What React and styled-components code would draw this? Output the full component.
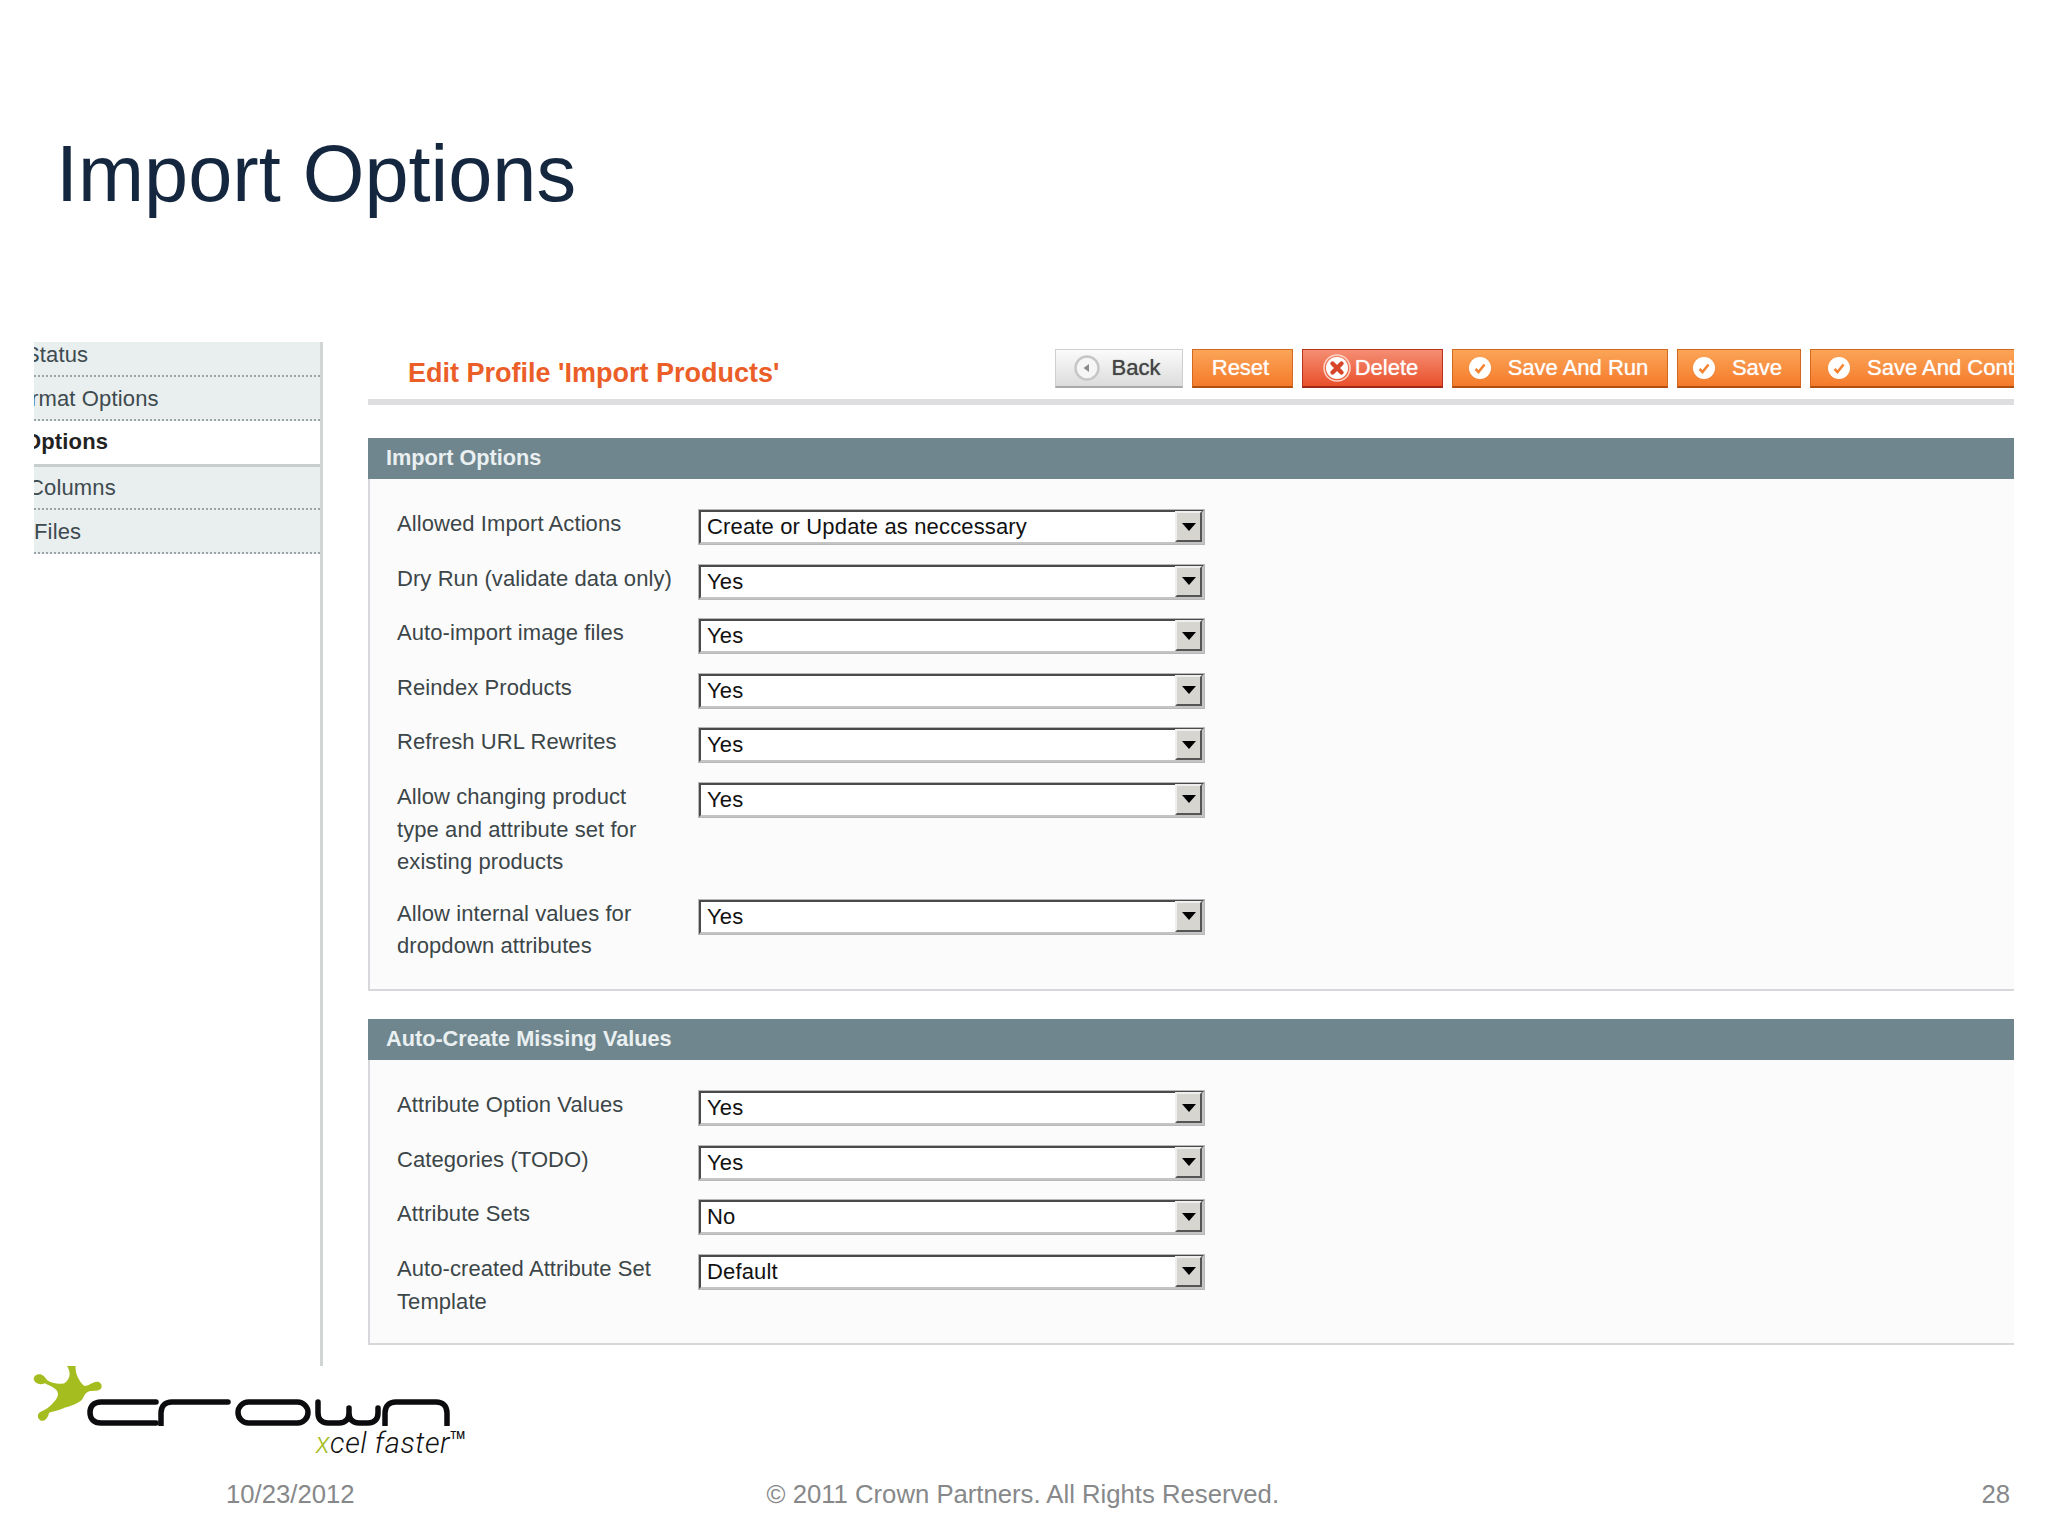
import React from 'react';
import styled, { createGlobalStyle } from 'styled-components';

const GlobalStyle = createGlobalStyle`
  html, body {
    margin: 0;
    padding: 0;
    background: #fff;
  }
  body {
    font-family: "Liberation Sans", Arial, sans-serif;
  }
`;

const Page = styled.div`
  width: 2048px;
  height: 1536px;
  overflow: hidden;
  display: flex;
  flex-direction: column;
`;

const SlideTitle = styled.h1`
  margin: 0;
  padding: 124px 0 0 56px;
  height: 342px;
  box-sizing: border-box;
  font-size: 79.3px;
  line-height: 100px;
  font-weight: 400;
  color: #14273f;
`;

const Shot = styled.div`
  display: flex;
  width: 1980px;
  margin-left: 34px;
  height: 1024px;
  overflow: hidden;
`;

const Sidebar = styled.div`
  width: 289px;
  flex: none;
  border-right: 3px solid #d2d5d6;
  box-sizing: border-box;
  height: 100%;
`;

const SideItem = styled.div`
  height: ${p => p.$height}px;
  box-sizing: border-box;
  overflow: hidden;
  padding-top: ${p => p.$top || 0}px;
  font-size: 22px;
  letter-spacing: 0.15px;
  line-height: ${p => p.$line || 32}px;
  color: ${p => (p.$active ? '#222' : '#3d4a4f')};
  font-weight: ${p => (p.$active ? 700 : 400)};
  background: ${p => (p.$active ? '#fff' : '#e9eeee')};
  border-bottom: ${p => (p.$active ? 'none' : '2px dotted #9aa3a5')};
  border-top: ${p => (p.$topLine ? '3px solid #c8cdce' : 'none')};
  span {
    display: block;
    white-space: nowrap;
    margin-left: ${p => p.$shift}px;
  }
`;

const Main = styled.div`
  flex: 1;
  min-width: 0;
  margin-left: 45px;
`;

const HeadRow = styled.div`
  height: 50px;
  display: flex;
  border-bottom: 6px solid #dedee0;
  margin-bottom: 33px;
  padding: 7px 0 0 40px;
`;

const PageHeading = styled.h2`
  margin: 0;
  width: 647px;
  flex: none;
  font-size: 27px;
  line-height: 36px;
  padding-top: 6px;
  font-weight: 700;
  color: #eb5e28;
`;

const Toolbar = styled.div`
  display: flex;
  gap: 9px;
  flex: none;
`;

const Button = styled.div`
  width: ${p => p.$width}px;
  height: 39px;
  box-sizing: border-box;
  flex: none;
  display: flex;
  align-items: center;
  justify-content: center;
  padding-right: 4px;
  gap: ${p => p.$gap || 0}px;
  white-space: nowrap;
  font-size: 22px;
  font-weight: 400;
  text-shadow: 0 0 1px ${p => (p.$kind === 'back' ? 'rgba(40,50,60,.7)' : 'rgba(255,255,255,.8)')};
  color: ${p => (p.$kind === 'back' ? '#444' : '#fff')};
  border: 1px solid ${p => (p.$kind === 'back' ? '#cfcfcf' : p.$kind === 'del' ? '#b8331b' : '#d2691e')};
  border-bottom: 2px solid ${p => (p.$kind === 'back' ? '#a9a9a9' : p.$kind === 'del' ? '#a02814' : '#b14e12')};
  background: ${p =>
    p.$kind === 'back'
      ? 'linear-gradient(#fbfbfb, #dcdcdc)'
      : p.$kind === 'del'
        ? 'linear-gradient(#f58e74, #e9502a)'
        : 'linear-gradient(#fba557, #f57a2b)'};
`;

const WideButton = styled(Button)`
  justify-content: flex-start;
  padding-left: 16px;
  padding-right: 0;
`;

const Panel = styled.section`
  margin-bottom: 28px;
`;

const PanelTitle = styled.div`
  height: 41px;
  background: #6f868e;
  box-sizing: border-box;
  padding-left: 18px;
  font-size: 21.7px;
  line-height: 40px;
  font-weight: 700;
  color: #eaf0f1;
`;

const PanelBody = styled.div`
  background: #fbfbfc;
  border-left: 2px solid #d8d8dc;
  border-bottom: 2px solid #d8d8dc;
  padding: 30px 0 ${p => p.$bottom}px 27px;
  display: flex;
  flex-direction: column;
  gap: 18.6px;
`;

const FormRow = styled.div`
  display: flex;
  align-items: flex-start;
`;

const Label = styled.div`
  width: 301px;
  flex: none;
  margin-top: -1px;
  padding-bottom: 1px;
  font-size: 22px;
  letter-spacing: 0.08px;
  line-height: 32.7px;
  color: #3c4648;
`;

const Select = styled.div`
  width: 507px;
  height: 36px;
  flex: none;
  box-sizing: border-box;
  display: flex;
  background: #fff;
  border: 3px solid #c4c4c4;
  border-top-color: #4a4a4a;
  border-left-color: #4a4a4a;
  outline: 1px solid #b8b8b8;
  outline-offset: -1px;
  font-size: 22px;
  letter-spacing: 0.15px;
  line-height: 30px;
  color: #111;
  padding-left: 6px;
`;

const SelectValue = styled.div`
  flex: 1;
  white-space: nowrap;
  overflow: hidden;
`;

const SelectArrow = styled.div`
  width: 27px;
  flex: none;
  margin-top: -1px;
  display: flex;
  align-items: center;
  justify-content: center;
  background: #d6d5d0;
  border-top: 2px solid #efefef;
  border-left: 2px solid #efefef;
  border-right: 2px solid #555;
  border-bottom: 2px solid #555;
  box-sizing: border-box;
  &::after {
    content: '';
    border-left: 7px solid transparent;
    border-right: 7px solid transparent;
    border-top: 8px solid #000;
  }
`;

const Bottom = styled.div`
  flex: 1;
  display: flex;
  flex-direction: column;
`;

const Logo = styled.div`
  width: 465px;
  height: 106px;
  display: flex;
  flex-direction: column;
  align-items: flex-end;
`;

const LogoMark = styled.svg`
  width: 465px;
  height: 60px;
  flex: none;
  display: block;
`;

const Tagline = styled.div`
  font-family: "Roboto", "Liberation Sans", sans-serif;
  font-style: italic;
  font-weight: 300;
  font-size: 29px;
  letter-spacing: 0.6px;
  line-height: 34px;
  color: #111;
  white-space: nowrap;
  em {
    color: #a5bd1f;
    font-style: italic;
  }
  sup {
    font-size: 10px;
    line-height: 0;
    vertical-align: 14px;
    font-style: normal;
    font-weight: 500;
    letter-spacing: 0;
  }
`;

const FooterRow = styled.div`
  display: flex;
  font-size: 25.7px;
  line-height: 34px;
  color: #86888a;
  padding: 5px 38px 0 226px;
  span:nth-child(2) {
    margin-left: 412px;
  }
  span:last-child {
    margin-left: auto;
  }
`;

const CheckIcon = () => (
  <svg width="24" height="24" viewBox="0 0 24 24">
    <circle cx="12" cy="12" r="11" fill="#fff" />
    <path d="M7.5 13l3 3L16.5 8.5" fill="none" stroke="#f58433" strokeWidth="2.6" />
  </svg>
);

const DeleteIcon = () => (
  <svg width="28" height="28" viewBox="0 0 28 28">
    <circle cx="14" cy="14" r="13" fill="none" stroke="#fbd3c6" strokeWidth="1.5" />
    <circle cx="14" cy="14" r="11" fill="#fff" />
    <path d="M9.5 9.5l9 9M18.5 9.5l-9 9" stroke="#d8462a" strokeWidth="4.4" strokeLinecap="round" />
  </svg>
);

const BackIcon = () => (
  <svg width="26" height="26" viewBox="0 0 26 26">
    <circle cx="13" cy="13" r="11.5" fill="#f6f6f6" stroke="#c6c6c6" strokeWidth="2.4" />
    <path d="M15 9v8l-5.5-4z" fill="#8c8c8c" />
  </svg>
);

function FieldRow({ label, value }) {
  return (
    <FormRow>
      <Label>{label}</Label>
      <Select>
        <SelectValue>{value}</SelectValue>
        <SelectArrow />
      </Select>
    </FormRow>
  );
}

export default function App() {
  return (
    <Page>
      <GlobalStyle />
      <SlideTitle>Import Options</SlideTitle>
      <Shot>
        <Sidebar>
          <SideItem $height={35} $line={26} $shift={-9}><span>Status</span></SideItem>
          <SideItem $height={44} $top={6} $shift={-29}><span>Format Options</span></SideItem>
          <SideItem $height={43} $top={5} $active $shift={-10}><span>Options</span></SideItem>
          <SideItem $height={46} $top={5} $topLine $shift={-6}><span>Columns</span></SideItem>
          <SideItem $height={44} $top={6} $shift={0}><span>Files</span></SideItem>
        </Sidebar>
        <Main>
          <HeadRow>
            <PageHeading>Edit Profile 'Import Products'</PageHeading>
            <Toolbar>
              <Button $kind="back" $width={128} $gap={12}><BackIcon />Back</Button>
              <Button $width={101}>Reset</Button>
              <Button $kind="del" $width={141} $gap={4}><DeleteIcon />Delete</Button>
              <Button $width={216} $gap={16}><CheckIcon />Save And Run</Button>
              <Button $width={124} $gap={16}><CheckIcon />Save</Button>
              <WideButton $width={300} $gap={16}><CheckIcon />Save And Continue Edit</WideButton>
            </Toolbar>
          </HeadRow>
          <Panel>
            <PanelTitle>Import Options</PanelTitle>
            <PanelBody $bottom={25}>
              <FieldRow label="Allowed Import Actions" value="Create or Update as neccessary" />
              <FieldRow label="Dry Run (validate data only)" value="Yes" />
              <FieldRow label="Auto-import image files" value="Yes" />
              <FieldRow label="Reindex Products" value="Yes" />
              <FieldRow label="Refresh URL Rewrites" value="Yes" />
              <FieldRow label={<>Allow changing product<br />type and attribute set for<br />existing products</>} value="Yes" />
              <FieldRow label={<>Allow internal values for<br />dropdown attributes</>} value="Yes" />
            </PanelBody>
          </Panel>
          <Panel>
            <PanelTitle>Auto-Create Missing Values</PanelTitle>
            <PanelBody $bottom={24}>
              <FieldRow label="Attribute Option Values" value="Yes" />
              <FieldRow label="Categories (TODO)" value="Yes" />
              <FieldRow label="Attribute Sets" value="No" />
              <FieldRow label={<>Auto-created Attribute Set<br />Template</>} value="Default" />
            </PanelBody>
          </Panel>
        </Main>
      </Shot>
      <Bottom>
        <Logo>
          <LogoMark viewBox="0 0 465 60">
            <path
              transform="translate(25,-6) scale(0.3333)"
              d="M126 18C135 14 145 14 152 18C150 35 158 60 178 78C190 78 200 68 212 66C226 63 236 78 226 88C216 96 200 90 188 96C180 100 176 110 172 118C160 132 135 138 112 146C98 152 84 154 72 158C70 172 60 184 48 182C36 178 36 160 46 156C60 150 76 140 90 122C100 110 102 100 94 90C84 80 70 76 60 70C46 76 30 72 26 58C26 46 40 40 50 44C58 48 62 54 66 60C80 70 100 74 118 70C134 60 140 40 126 18Z"
              fill="#a5bd1f"
            />
            <g fill="none" stroke="#0c0c0f" strokeWidth="5.5" strokeLinecap="round">
              <path d="M156 57H101c-7 0-11-4-11-10.5S94 36 101 36h55" />
              <path d="M161 59V47c0-7 4-11 11-11h56" />
              <rect x="238" y="36" width="70" height="21" rx="10.5" />
              <path d="M318 36v11c0 6 3 10 10 10h11c7 0 10-4 10-10V42M349 47c0 6 3 10 10 10h9c7 0 10-4 10-10V42" />
              <path d="M385 59V47c0-7 4-11 11-11h40c7 0 11 4 11 11v12" />
            </g>
          </LogoMark>
          <Tagline><em>x</em>cel faster<sup>TM</sup></Tagline>
        </Logo>
        <FooterRow>
          <span>10/23/2012</span>
          <span>© 2011 Crown Partners. All Rights Reserved.</span>
          <span>28</span>
        </FooterRow>
      </Bottom>
    </Page>
  );
}
